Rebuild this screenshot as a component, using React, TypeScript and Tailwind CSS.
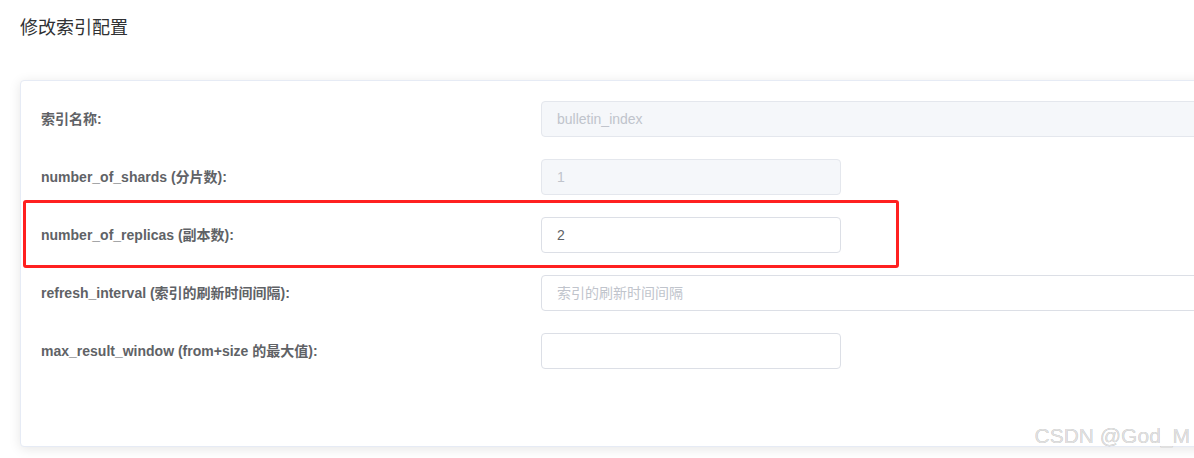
import React from "react";

type Field = {
  label: string;
  value?: string;
  placeholder?: string;
  disabled?: boolean;
  wide?: boolean;
};

const fields: Field[] = [
  { label: "索引名称:", value: "bulletin_index", disabled: true, wide: true },
  { label: "number_of_shards (分片数):", value: "1", disabled: true },
  { label: "number_of_replicas (副本数):", value: "2" },
  { label: "refresh_interval (索引的刷新时间间隔):", placeholder: "索引的刷新时间间隔", wide: true },
  { label: "max_result_window (from+size 的最大值):" },
];

const font = "font-['Liberation_Sans','Noto_Sans_CJK_SC',sans-serif]";

export default function App() {
  return (
    <div className={`relative h-[458px] w-[1194px] overflow-hidden bg-white ${font}`}>
      <div className="px-5 pt-[16px]">
        <h1 className="text-[18px] leading-[24px] text-[#303133]">修改索引配置</h1>
      </div>

      <div className="ml-5 mt-[40px] h-[367px] w-[1240px] rounded-[4px] border border-[#e6ebf5] bg-white px-5 pt-5 shadow-[0_2px_12px_0_rgba(0,0,0,0.1)]">
        {fields.map((f) => (
          <div key={f.label} className="mb-[22px] flex h-9 items-center">
            <label className="w-[500px] shrink-0 text-[14px] font-bold text-[#606266]">
              {f.label}
            </label>
            <input
              readOnly
              disabled={f.disabled}
              defaultValue={f.value}
              placeholder={f.placeholder}
              className={`h-9 ${f.wide ? "w-[700px]" : "w-[300px]"} rounded-[4px] border px-[15px] text-[14px] outline-none placeholder:text-[#c0c4cc] ${
                f.disabled
                  ? "border-[#e4e7ed] bg-[#f5f7fa] text-[#c0c4cc]"
                  : "border-[#dcdfe6] bg-white text-[#606266]"
              }`}
            />
          </div>
        ))}
      </div>

      <div className="pointer-events-none absolute left-[23px] top-[200px] h-[68px] w-[876px] rounded-[3px] border-[3px] border-[#ff2020]" />

      <div className="pointer-events-none absolute right-[4px] top-[423px] text-[21px] leading-[26px] text-[#e0e0e0] [text-shadow:0_0_0.6px_rgba(0,0,0,0.35)]">
        CSDN @God_M
      </div>
    </div>
  );
}
